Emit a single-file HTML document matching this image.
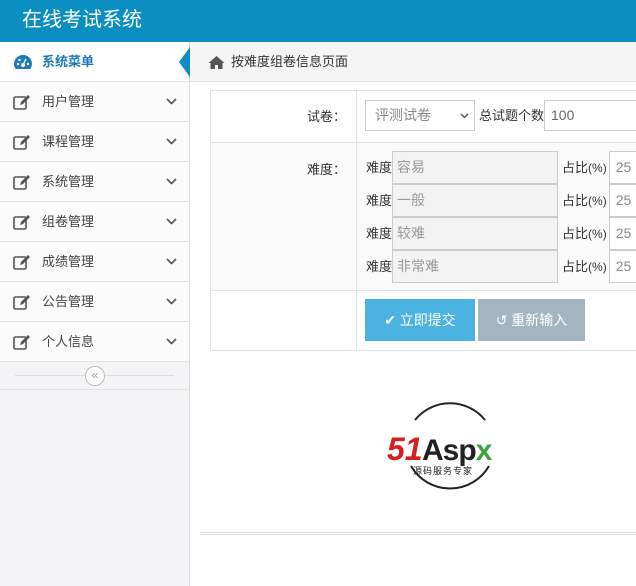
<!DOCTYPE html>
<html><head><meta charset="utf-8"><style>
*{margin:0;padding:0;box-sizing:border-box}
body{width:636px;height:586px;overflow:hidden;font-family:"Liberation Sans","Noto Sans CJK SC",sans-serif;font-size:13px;color:#333;background:#fff;position:relative;white-space:nowrap}
.hd{position:absolute;left:0;top:0;width:636px;height:42px;background:#0b8fc0;color:#fff;font-size:20px;line-height:40px;padding-left:22px}
.sb{position:absolute;left:0;top:42px;width:190px;height:544px;background:#f4f3f6;border-right:1px solid #d8d8d8}
.mi{height:40px;border-bottom:1px solid #e5e5e5;background:#fcfbfc;position:relative;line-height:39px;padding-left:42px;color:#444}
.mi svg.i{position:absolute;left:13px;top:12px}
.mi svg.ch{position:absolute;left:166px;top:16px}
.mi.act{color:#1c7ab8;font-weight:bold;background:#fff}
.col{height:28px;position:relative;border-bottom:1px solid #e2e2e2}
.col .ln{position:absolute;left:15px;right:15px;top:13px;border-top:1px solid #ddd}
.col .c{position:absolute;left:85px;top:4px;width:20px;height:20px;border:1px solid #bbb;border-radius:50%;background:#fff;color:#999;font-size:12px;line-height:17px;text-align:center}
.bc{position:absolute;left:190px;top:42px;width:446px;height:40px;background:#f5f5f5;border-bottom:1px solid #e5e5e5;line-height:40px;padding-left:41px;font-size:13px;color:#333}
.arr{position:absolute;left:179px;top:47px;width:0;height:0;border-top:15px solid transparent;border-bottom:15px solid transparent;border-right:11px solid #0b8fc0}
.tb{position:absolute;left:210px;top:90px;width:440px;border:1px solid #e3e3e3;border-right:none}
.r{display:flex;border-bottom:1px solid #e3e3e3}
.r:last-child{border-bottom:none}
.r>div,.r div,.r span{flex-shrink:0}
.lb{width:146px;border-right:1px solid #e3e3e3;text-align:right;padding-right:10px}
.inp{border:1px solid #ccc;height:31px;background:#fff;color:#888;padding-left:6px;line-height:29px;font-size:14px}
.ro{background:#f3f3f3;color:#999}
.dr{display:flex;height:33px;line-height:33px}
.dr .inp{line-height:31px}
.pc{margin-left:4px;font-size:13px}
.pc small{font-size:12px}
</style></head><body>
<div class="hd">在线考试系统</div>
<div class="sb">
<div class="mi act"><svg class="i" width="20" height="16" viewBox="0 0 20 16"><path d="M10 1A9 9 0 0 0 1 10c0 2 .7 3.8 1.8 5h14.4A9 9 0 0 0 19 10 9 9 0 0 0 10 1z" fill="#1c7ab8"/><circle cx="10" cy="11" r="2" fill="#fff"/><path d="M10 11L13 5" stroke="#fff" stroke-width="1.5"/><circle cx="5" cy="10" r="1.2" fill="#fff"/><circle cx="6.5" cy="6" r="1.2" fill="#fff"/><circle cx="15" cy="10" r="1.2" fill="#fff"/></svg>系统菜单</div>
<div class="mi"><svg class="i" width="18" height="16" viewBox="0 0 18 16"><rect x="1" y="3" width="12" height="12" rx="1.5" fill="none" stroke="#555" stroke-width="1.6"/><path d="M7 11l1-3 7-7 2 2-7 7z" fill="#555"/></svg>用户管理<svg class="ch" width="11" height="7" viewBox="0 0 11 7"><path d="M1 1l4.5 4.5L10 1" fill="none" stroke="#555" stroke-width="1.6"/></svg></div>
<div class="mi"><svg class="i" width="18" height="16" viewBox="0 0 18 16"><rect x="1" y="3" width="12" height="12" rx="1.5" fill="none" stroke="#555" stroke-width="1.6"/><path d="M7 11l1-3 7-7 2 2-7 7z" fill="#555"/></svg>课程管理<svg class="ch" width="11" height="7" viewBox="0 0 11 7"><path d="M1 1l4.5 4.5L10 1" fill="none" stroke="#555" stroke-width="1.6"/></svg></div>
<div class="mi"><svg class="i" width="18" height="16" viewBox="0 0 18 16"><rect x="1" y="3" width="12" height="12" rx="1.5" fill="none" stroke="#555" stroke-width="1.6"/><path d="M7 11l1-3 7-7 2 2-7 7z" fill="#555"/></svg>系统管理<svg class="ch" width="11" height="7" viewBox="0 0 11 7"><path d="M1 1l4.5 4.5L10 1" fill="none" stroke="#555" stroke-width="1.6"/></svg></div>
<div class="mi"><svg class="i" width="18" height="16" viewBox="0 0 18 16"><rect x="1" y="3" width="12" height="12" rx="1.5" fill="none" stroke="#555" stroke-width="1.6"/><path d="M7 11l1-3 7-7 2 2-7 7z" fill="#555"/></svg>组卷管理<svg class="ch" width="11" height="7" viewBox="0 0 11 7"><path d="M1 1l4.5 4.5L10 1" fill="none" stroke="#555" stroke-width="1.6"/></svg></div>
<div class="mi"><svg class="i" width="18" height="16" viewBox="0 0 18 16"><rect x="1" y="3" width="12" height="12" rx="1.5" fill="none" stroke="#555" stroke-width="1.6"/><path d="M7 11l1-3 7-7 2 2-7 7z" fill="#555"/></svg>成绩管理<svg class="ch" width="11" height="7" viewBox="0 0 11 7"><path d="M1 1l4.5 4.5L10 1" fill="none" stroke="#555" stroke-width="1.6"/></svg></div>
<div class="mi"><svg class="i" width="18" height="16" viewBox="0 0 18 16"><rect x="1" y="3" width="12" height="12" rx="1.5" fill="none" stroke="#555" stroke-width="1.6"/><path d="M7 11l1-3 7-7 2 2-7 7z" fill="#555"/></svg>公告管理<svg class="ch" width="11" height="7" viewBox="0 0 11 7"><path d="M1 1l4.5 4.5L10 1" fill="none" stroke="#555" stroke-width="1.6"/></svg></div>
<div class="mi"><svg class="i" width="18" height="16" viewBox="0 0 18 16"><rect x="1" y="3" width="12" height="12" rx="1.5" fill="none" stroke="#555" stroke-width="1.6"/><path d="M7 11l1-3 7-7 2 2-7 7z" fill="#555"/></svg>个人信息<svg class="ch" width="11" height="7" viewBox="0 0 11 7"><path d="M1 1l4.5 4.5L10 1" fill="none" stroke="#555" stroke-width="1.6"/></svg></div>
<div class="col"><div class="ln"></div><div class="c">«</div></div>
</div>
<div class="arr"></div>
<div class="bc"><svg style="position:absolute;left:18px;top:13px" width="17" height="14" viewBox="0 0 17 14"><path d="M8.5 1L0.5 8h2v6h4.5v-4h3v4H14.5V8h2z" fill="#555"/></svg>按难度组卷信息页面</div>
<div class="tb">
<div class="r" style="height:52px"><div class="lb" style="line-height:51px">试卷：</div>
<div style="padding:9px 0 0 8px;display:flex">
<div class="inp" style="width:110px;position:relative;padding-left:9px">评测试卷<svg style="position:absolute;left:94px;top:12px" width="9" height="6" viewBox="0 0 9 6"><path d="M1 1l3.5 3.5L8 1" fill="none" stroke="#555" stroke-width="1.5"/></svg></div>
<span style="line-height:31px;padding:0 0 0 4px;font-size:13px">总试题个数</span><div class="inp" style="width:120px;color:#666">100</div></div></div>
<div class="r" style="height:148px;background:#fafafa"><div class="lb" style="padding-top:16px">难度：</div>
<div style="padding:8px 0 0 9px">
<div class="dr">难度<div class="inp ro" style="width:166px;height:33px;padding-left:4px">容易</div><span class="pc">占比<small>(%)</small></span><div class="inp" style="width:60px;margin-left:2px;height:33px">25</div></div>
<div class="dr">难度<div class="inp ro" style="width:166px;height:33px;padding-left:4px">一般</div><span class="pc">占比<small>(%)</small></span><div class="inp" style="width:60px;margin-left:2px;height:33px">25</div></div>
<div class="dr">难度<div class="inp ro" style="width:166px;height:33px;padding-left:4px">较难</div><span class="pc">占比<small>(%)</small></span><div class="inp" style="width:60px;margin-left:2px;height:33px">25</div></div>
<div class="dr">难度<div class="inp ro" style="width:166px;height:33px;padding-left:4px">非常难</div><span class="pc">占比<small>(%)</small></span><div class="inp" style="width:60px;margin-left:2px;height:33px">25</div></div>
</div></div>
<div class="r" style="height:59px"><div class="lb"></div>
<div style="padding:8px 0 0 8px;display:flex">
<div style="width:110px;height:42px;background:#4ab3e2;color:#fff;font-size:14px;line-height:42px;text-align:center">✔ 立即提交</div>
<div style="width:107px;height:42px;background:#a2b5c0;color:#fff;font-size:14px;line-height:42px;text-align:center;margin-left:3px">↺ 重新输入</div>
</div></div>
</div>
<svg style="position:absolute;left:385px;top:400px" width="130" height="95" viewBox="0 0 130 95">
<path d="M30 20A45 45 0 0 1 100 20" fill="none" stroke="#222" stroke-width="2"/>
<path d="M104 66A45 45 0 0 1 26 66" fill="none" stroke="#222" stroke-width="2"/>
<text x="2" y="60" font-family="Liberation Sans" font-weight="bold" font-style="italic" font-size="32" fill="#d62020">51</text>
<text x="37" y="60" font-family="Liberation Sans" font-weight="bold" font-size="30" fill="#222" letter-spacing="-1">Asp<tspan fill="#3aa63a">x</tspan></text>
<text x="28" y="74" font-family="Noto Sans CJK SC" font-size="9" fill="#222" letter-spacing="1">源码服务专家</text>
</svg>
<div style="position:absolute;left:200px;top:532px;width:436px;border-top:3px double #ddd"></div>
</body></html>
